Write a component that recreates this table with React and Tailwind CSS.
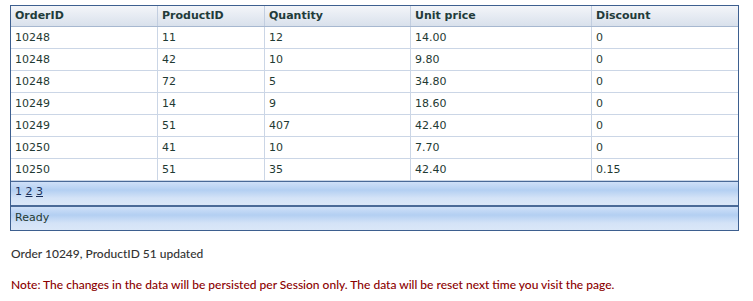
import React from 'react';

const rows = [
  ['10248', '11', '12', '14.00', '0'],
  ['10248', '42', '10', '9.80', '0'],
  ['10248', '72', '5', '34.80', '0'],
  ['10249', '14', '9', '18.60', '0'],
  ['10249', '51', '407', '42.40', '0'],
  ['10250', '41', '10', '7.70', '0'],
  ['10250', '51', '35', '42.40', '0.15'],
];

const cols = ['OrderID', 'ProductID', 'Quantity', 'Unit price', 'Discount'];
const widths = ['w-[147px]', 'w-[107px]', 'w-[146px]', 'w-[181px]', 'flex-1'];

export default function App() {
  return (
    <div className="w-[753px] h-[301px] bg-white pt-[5px] pl-[10px]" style={{ fontFamily: 'Tahoma, "DejaVu Sans", sans-serif' }}>
      {/* Grid */}
      <div className="w-[729px] border border-[#3d5f8f] text-[11px] text-[#1f3a33]">
        <div className="flex h-[21px] border-b border-[#a7b8d0] bg-gradient-to-b from-[#f3f5f9] to-[#d9e1ec] font-bold text-[#223b3a]">
          {cols.map((c, i) => (
            <div key={c} className={`${widths[i]} ${i < 4 ? 'border-r border-[#c2cee0]' : ''} px-[4px] leading-[20px]`}>{c}</div>
          ))}
        </div>
        {rows.map((r, ri) => (
          <div key={ri} className="flex h-[22px] border-b border-[#cbd6e6] bg-white">
            {r.map((v, i) => (
              <div key={i} className={`${widths[i]} ${i < 4 ? 'border-r border-[#cbd6e6]' : ''} px-[4px] leading-[22px]`}>{v}</div>
            ))}
          </div>
        ))}
        {/* Pager */}
        <div className="h-[24px] border-t border-[#4a6a98] bg-[linear-gradient(to_bottom,#cfe0f8_0%,#b3cff2_35%,#d4e3f7_70%,#dae7f8_100%)] px-[4px] leading-[20px] text-[#1a2f5a]">
          <span>1 </span><span className="underline">2</span> <span className="underline">3</span>
        </div>
        {/* Status */}
        <div className="h-[25px] border-t-2 border-[#4a6a98] bg-[linear-gradient(to_bottom,#cfe0f8_0%,#b3cff2_35%,#d4e3f7_70%,#dae7f8_100%)] px-[4px] leading-[21px] text-[#1f3a33]">
          Ready
        </div>
      </div>
      <div className="mt-[14px] pl-[1px] text-[12px] font-medium text-[#333333]" style={{ fontFamily: 'Lato, "Open Sans", sans-serif' }}>
        Order 10249, ProductID 51 updated
      </div>
      <div className="mt-[13px] pl-[1px] text-[12px] font-medium text-[#8b0000]" style={{ fontFamily: 'Lato, "Open Sans", sans-serif' }}>
        Note: The changes in the data will be persisted per Session only. The data will be reset next time you visit the page.
      </div>
    </div>
  );
}
